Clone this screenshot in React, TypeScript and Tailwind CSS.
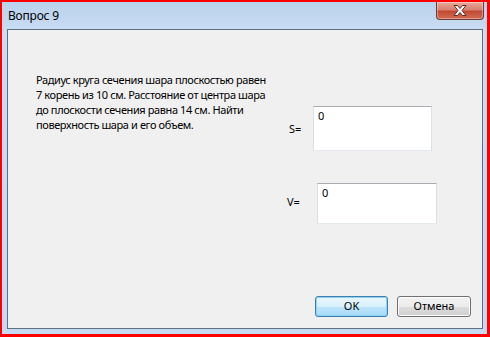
const font = "font-['Segoe_UI','Noto_Sans',sans-serif]";

function CloseButton() {
  return (
    <div className="absolute right-[3px] top-0 flex h-[18px] w-[48px] items-center justify-center rounded-b-[4px] border border-t-0 border-[#6b3a36] bg-[linear-gradient(#e9a99b_0%,#d8806f_45%,#c24a34_55%,#d26b55_100%)] shadow-[inset_0_0_0_1px_rgba(255,255,255,0.35)]">
      <svg width="16" height="13" viewBox="0 0 16 13">
        <path d="M2 1.5 L5.5 1.5 L8 4.5 L10.5 1.5 L14 1.5 L10 6.5 L14 11.5 L10.5 11.5 L8 8.5 L5.5 11.5 L2 11.5 L6 6.5 Z" fill="#ffffff" stroke="#5c2b26" strokeWidth="1" strokeLinejoin="round" />
      </svg>
    </div>
  );
}

function Field({ w, h }: { w: string; h: string }) {
  return (
    <div className={`${w} ${h} border border-t-[#abadb3] border-x-[#dbdfe6] border-b-[#e3e9ef] bg-white pl-[4px] pt-[1px] text-[11px] leading-[15px] text-black`}>
      0
    </div>
  );
}

export default function App() {
  return (
    <div className={`h-[337px] w-[490px] bg-[#ff0000] pb-[3px] pl-[2px] pr-[3px] pt-[2px] ${font}`}>
      <div className="flex h-full w-full flex-col bg-[linear-gradient(#bad2ec,#c9ddf3_30px,#c6dbf2)]">
        <div className="relative h-[27px] shrink-0">
          <div className="pl-[6px] pt-[6px] text-[12px] leading-[15px] tracking-[-0.2px] text-black">Вопрос 9</div>
          <CloseButton />
        </div>
        <div className="mb-[5px] ml-[5px] mr-[4px] flex flex-1 flex-col border border-[#5d6f82] bg-[#f0f0f0]">
          <div className="flex">
            <div className="ml-[28px] mt-[42px] w-[251px] shrink-0 whitespace-nowrap text-[11px] leading-[15px] tracking-[-0.4px] text-black">
              Радиус круга сечения шара плоскостью равен
              <br />7 корень из 10 см. Расстояние от центра шара
              <br />до плоскости сечения равна 14 см. Найти
              <br />поверхность шара и его объем.
            </div>
            <div className="flex flex-col">
              <div className="mt-[76px] flex items-center">
                <div className="w-[26px] pl-[2px] text-[11px] leading-[15px] text-black">S=</div>
                <Field w="w-[119px]" h="h-[45px]" />
              </div>
              <div className="mt-[32px] flex items-center">
                <div className="-mt-[4px] w-[30px] text-[11px] leading-[15px] text-black">V=</div>
                <Field w="w-[120px]" h="h-[41px]" />
              </div>
            </div>
          </div>
          <div className="mt-auto flex justify-end gap-[9px] pb-[11px] pr-[11px]">
            <div className="flex h-[21px] w-[73px] items-center justify-center rounded-[3px] border border-[#3c7fb1] bg-[linear-gradient(#eaf6fd_0%,#d9f0fc_50%,#bee6fd_50%,#a7d9f5_100%)] text-[11px] text-black shadow-[inset_0_0_0_1px_#8fd0f5]">
              OK
            </div>
            <div className="flex h-[21px] w-[74px] items-center justify-center rounded-[3px] border border-[#707070] bg-[linear-gradient(#f2f2f2_0%,#ebebeb_50%,#dddddd_50%,#cfcfcf_100%)] text-[11px] text-black shadow-[inset_0_0_0_1px_#fcfcfc]">
              Отмена
            </div>
          </div>
        </div>
      </div>
    </div>
  );
}
